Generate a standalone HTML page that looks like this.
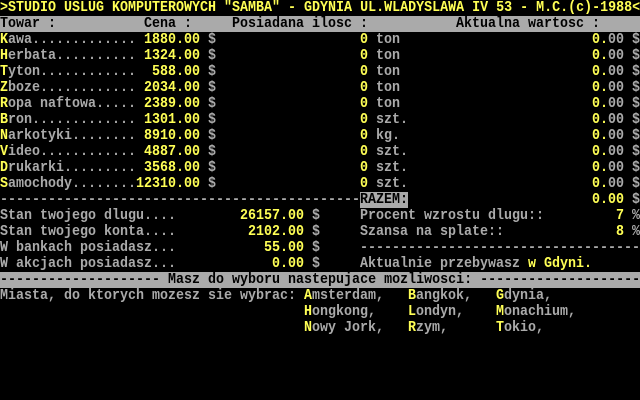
<!DOCTYPE html>
<html><head><meta charset="utf-8"><style>
html,body{margin:0;padding:0;background:#000;width:640px;height:400px;overflow:hidden}
#s{position:relative;width:640px;height:400px;font-family:"Liberation Mono",monospace;font-size:15px;font-weight:bold;color:#aaa}
.r{position:absolute;left:0;width:640px;height:16px;line-height:16px;white-space:pre}
.r span{position:absolute;top:0;transform:scaleX(0.8889);transform-origin:0 0}
.y{color:#ff5}
.bar{background:#aaa;color:#000}
</style></head><body><div id="s">
<div class="r y" style="top:0"><span style="left:0">&gt;STUDIO USLUG KOMPUTEROWYCH "SAMBA" - GDYNIA UL.WLADYSLAWA IV 53 - M.C.(c)-1988&lt;</span></div>
<div class="r bar" style="top:16px"><span style="left:0">Towar :</span><span style="left:144px">Cena :</span><span style="left:232px">Posiadana ilosc :</span><span style="left:456px">Aktualna wartosc :</span></div>

<div class="r" style="top:32px"><span style="left:0"><b class="y">K</b>awa.............</span><span class="y" style="left:144px">1880.00</span><span style="left:208px">$</span><span class="y" style="left:360px">0</span><span style="left:376px">ton</span><span style="left:592px"><b class="y">0.</b>00 $</span></div>
<div class="r" style="top:48px"><span style="left:0"><b class="y">H</b>erbata..........</span><span class="y" style="left:144px">1324.00</span><span style="left:208px">$</span><span class="y" style="left:360px">0</span><span style="left:376px">ton</span><span style="left:592px"><b class="y">0.</b>00 $</span></div>
<div class="r" style="top:64px"><span style="left:0"><b class="y">T</b>yton............</span><span class="y" style="left:152px">588.00</span><span style="left:208px">$</span><span class="y" style="left:360px">0</span><span style="left:376px">ton</span><span style="left:592px"><b class="y">0.</b>00 $</span></div>
<div class="r" style="top:80px"><span style="left:0"><b class="y">Z</b>boze............</span><span class="y" style="left:144px">2034.00</span><span style="left:208px">$</span><span class="y" style="left:360px">0</span><span style="left:376px">ton</span><span style="left:592px"><b class="y">0.</b>00 $</span></div>
<div class="r" style="top:96px"><span style="left:0"><b class="y">R</b>opa naftowa.....</span><span class="y" style="left:144px">2389.00</span><span style="left:208px">$</span><span class="y" style="left:360px">0</span><span style="left:376px">ton</span><span style="left:592px"><b class="y">0.</b>00 $</span></div>
<div class="r" style="top:112px"><span style="left:0"><b class="y">B</b>ron.............</span><span class="y" style="left:144px">1301.00</span><span style="left:208px">$</span><span class="y" style="left:360px">0</span><span style="left:376px">szt.</span><span style="left:592px"><b class="y">0.</b>00 $</span></div>
<div class="r" style="top:128px"><span style="left:0"><b class="y">N</b>arkotyki........</span><span class="y" style="left:144px">8910.00</span><span style="left:208px">$</span><span class="y" style="left:360px">0</span><span style="left:376px">kg.</span><span style="left:592px"><b class="y">0.</b>00 $</span></div>
<div class="r" style="top:144px"><span style="left:0"><b class="y">V</b>ideo............</span><span class="y" style="left:144px">4887.00</span><span style="left:208px">$</span><span class="y" style="left:360px">0</span><span style="left:376px">szt.</span><span style="left:592px"><b class="y">0.</b>00 $</span></div>
<div class="r" style="top:160px"><span style="left:0"><b class="y">D</b>rukarki.........</span><span class="y" style="left:144px">3568.00</span><span style="left:208px">$</span><span class="y" style="left:360px">0</span><span style="left:376px">szt.</span><span style="left:592px"><b class="y">0.</b>00 $</span></div>
<div class="r" style="top:176px"><span style="left:0"><b class="y">S</b>amochody........</span><span class="y" style="left:136px">12310.00</span><span style="left:208px">$</span><span class="y" style="left:360px">0</span><span style="left:376px">szt.</span><span style="left:592px"><b class="y">0.</b>00 $</span></div>

<div class="r" style="top:192px"><span style="left:0">---------------------------------------------</span><span class="bar" style="left:360px">RAZEM:</span><span style="left:592px"><b class="y">0.00</b> $</span></div>
<div class="r" style="top:208px"><span style="left:0">Stan twojego dlugu....</span><span class="y" style="left:240px">26157.00</span><span style="left:312px">$</span><span style="left:360px">Procent wzrostu dlugu::</span><span class="y" style="left:616px">7</span><span style="left:632px">%</span></div>
<div class="r" style="top:224px"><span style="left:0">Stan twojego konta....</span><span class="y" style="left:248px">2102.00</span><span style="left:312px">$</span><span style="left:360px">Szansa na splate::</span><span class="y" style="left:616px">8</span><span style="left:632px">%</span></div>
<div class="r" style="top:240px"><span style="left:0">W bankach posiadasz...</span><span class="y" style="left:264px">55.00</span><span style="left:312px">$</span><span style="left:360px">-----------------------------------</span></div>
<div class="r" style="top:256px"><span style="left:0">W akcjach posiadasz...</span><span class="y" style="left:272px">0.00</span><span style="left:312px">$</span><span style="left:360px">Aktualnie przebywasz <b class="y">w Gdyni.</b></span></div>
<div class="r bar" style="top:272px"><span style="left:0">-------------------- Masz do wyboru nastepujace mozliwosci: --------------------</span></div>
<div class="r" style="top:288px"><span style="left:0">Miasta, do ktorych mozesz sie wybrac:</span><span style="left:304px"><b class="y">A</b>msterdam,</span><span style="left:408px"><b class="y">B</b>angkok,</span><span style="left:496px"><b class="y">G</b>dynia,</span></div>
<div class="r" style="top:304px"><span style="left:304px"><b class="y">H</b>ongkong,</span><span style="left:408px"><b class="y">L</b>ondyn,</span><span style="left:496px"><b class="y">M</b>onachium,</span></div>
<div class="r" style="top:320px"><span style="left:304px"><b class="y">N</b>owy Jork,</span><span style="left:408px"><b class="y">R</b>zym,</span><span style="left:496px"><b class="y">T</b>okio,</span></div>
</div></body></html>
